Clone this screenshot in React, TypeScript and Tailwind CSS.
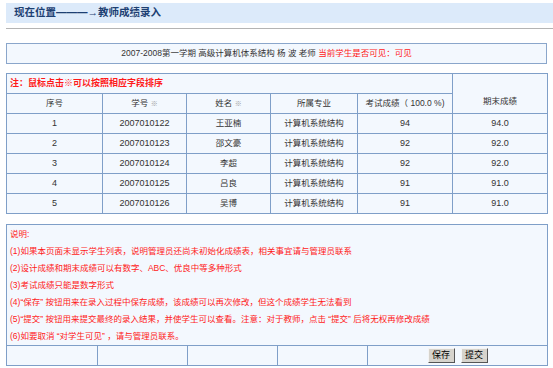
import React from 'react';

const rows = [
  { no: 1, id: '2007010122', name: '王亚楠', major: '计算机系统结构', exam: '94', final: '94.0' },
  { no: 2, id: '2007010123', name: '邵文豪', major: '计算机系统结构', exam: '92', final: '92.0' },
  { no: 3, id: '2007010124', name: '李超', major: '计算机系统结构', exam: '92', final: '92.0' },
  { no: 4, id: '2007010125', name: '吕良', major: '计算机系统结构', exam: '91', final: '91.0' },
  { no: 5, id: '2007010126', name: '吴博', major: '计算机系统结构', exam: '91', final: '91.0' },
];

const notes = [
  '(1)如果本页面未显示学生列表，说明管理员还尚未初始化成绩表，相关事宜请与管理员联系',
  '(2)设计成绩和期末成绩可以有数字、ABC、优良中等多种形式',
  '(3)考试成绩只能是数字形式',
  '(4)“保存” 按钮用来在录入过程中保存成绩，该成绩可以再次修改，但这个成绩学生无法看到',
  '(5)“提交” 按钮用来提交最终的录入结果，并使学生可以查看。注意：对于教师，点击 “提交” 后将无权再修改成绩',
  '(6)如要取消 “对学生可见” ，请与管理员联系。',
];

const cell = 'border border-[#7f9fc8] text-center align-middle p-0';

export default function App() {
  return (
    <div
      className="w-[553px] h-[368px] bg-white text-[8.5px] text-[#333] overflow-hidden"
      style={{ fontFamily: '"Liberation Sans", "Noto Sans CJK SC", sans-serif' }}
    >
      <div className="ml-[6px] mt-[3px] h-[20px] bg-[#dceafa] flex items-center pl-[8px] text-[10.5px] font-bold text-[#1d3f72]">
        现在位置———→教师成绩录入
      </div>
      <div className="ml-[6px] mt-[5px] h-px bg-[#b4b4b4]" />

      <div className="ml-[6px] mt-[14px] w-[541px] h-[21px] border border-[#8aa6cb] bg-[#f3f8fe] flex items-center justify-center pr-[20px]">
        <span>2007-2008第一学期 高级计算机体系结构 杨 波 老师&nbsp;</span>
        <span className="text-[#ff1a1a]">当前学生是否可见：可见</span>
      </div>

      <table className="ml-[6px] mt-[9px] w-[541px] table-fixed border-collapse bg-[#f3f8fe]">
        <colgroup>
          <col className="w-[96px]" />
          <col className="w-[84px]" />
          <col className="w-[84px]" />
          <col className="w-[87px]" />
          <col className="w-[95px]" />
          <col className="w-[95px]" />
        </colgroup>
        <tbody>
          <tr className="h-[20px]">
            <td colSpan={5} className="border border-[#7f9fc8] p-0 pl-[3px] text-left font-bold text-[9px] text-[#ff1a1a]">
              注：鼠标点击※可以按照相应字段排序
            </td>
            <td rowSpan={2} className={cell + ' !align-bottom pb-[5px]'}>
              期末成绩
            </td>
          </tr>
          <tr className="h-[20px]">
            <td className={cell}>序号</td>
            <td className={cell}>
              学号 <span className="text-[7px] text-[#999]">※</span>
            </td>
            <td className={cell}>
              姓名 <span className="text-[7px] text-[#999]">※</span>
            </td>
            <td className={cell}>所属专业</td>
            <td className={cell}>考试成绩（ 100.0 %)</td>
          </tr>
          {rows.map((r) => (
            <tr key={r.no} className="h-[20px]">
              <td className={cell + ' text-[9px]'}>{r.no}</td>
              <td className={cell + ' text-[9px]'}>{r.id}</td>
              <td className={cell}>{r.name}</td>
              <td className={cell}>{r.major}</td>
              <td className={cell + ' text-[9px]'}>{r.exam}</td>
              <td className={cell + ' text-[9px]'}>{r.final}</td>
            </tr>
          ))}
        </tbody>
      </table>

      <table className="ml-[6px] mt-[10px] w-[541px] table-fixed border-collapse bg-[#f3f8fe]">
        <colgroup>
          <col className="w-[91px]" />
          <col className="w-[90px]" />
          <col className="w-[90px]" />
          <col className="w-[90px]" />
          <col className="w-[180px]" />
        </colgroup>
        <tbody>
          <tr className="h-[120px]">
            <td colSpan={5} className="border border-[#7f9fc8] align-top pt-[1px] pl-[3px] text-[#ff1a1a] leading-[17px]">
              <div>说明:</div>
              {notes.map((n) => (
                <div key={n}>{n}</div>
              ))}
            </td>
          </tr>
          <tr className="h-[20px]">
            <td className={cell}></td>
            <td className={cell}></td>
            <td className={cell}></td>
            <td className={cell}></td>
            <td className={cell}>
              <div className="flex justify-center gap-[6px]">
                <button className="w-[27px] h-[15px] bg-[#d6d3cc] border border-t-[#f4f4f4] border-l-[#f4f4f4] border-r-[#555] border-b-[#555] text-[9px] text-black leading-none">
                  保存
                </button>
                <button className="w-[27px] h-[15px] bg-[#d6d3cc] border border-t-[#f4f4f4] border-l-[#f4f4f4] border-r-[#555] border-b-[#555] text-[9px] text-black leading-none">
                  提交
                </button>
              </div>
            </td>
          </tr>
        </tbody>
      </table>
    </div>
  );
}
